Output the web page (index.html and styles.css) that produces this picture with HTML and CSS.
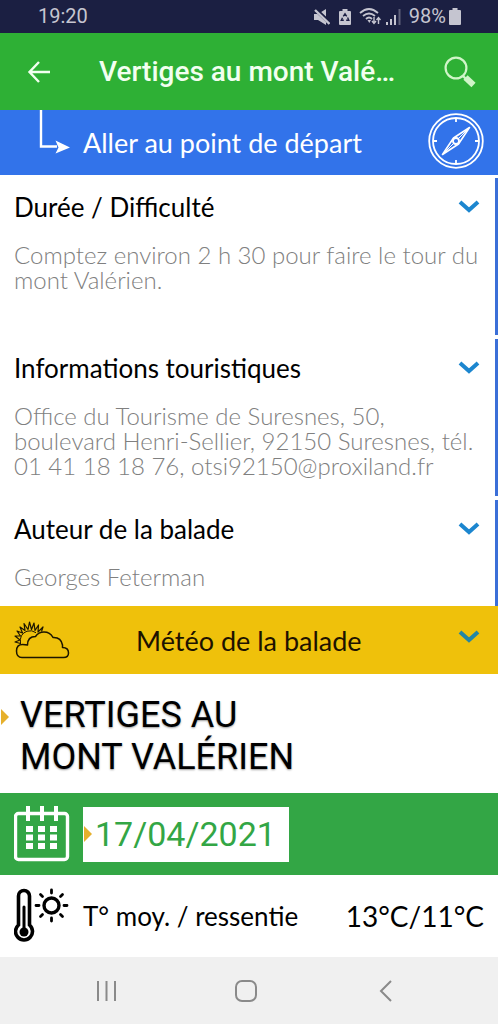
FILE: index.html
```html
<!DOCTYPE html>
<html lang="fr">
<head>
<meta charset="utf-8">
<meta name="viewport" content="width=device-width, initial-scale=1">
<title>Vertiges au mont Valérien</title>
<link rel="stylesheet" href="styles.css">
</head>
<body>
<div class="status">
  <time>19:20</time>
  <div class="status-icons">
    <svg width="16" height="16" viewBox="0 0 16 16" fill="currentColor"><path d="M0 5h4l8-5v16l-8-5H0z"/><path d="M0 -1l17 16" stroke="#1b1f42" stroke-width="4"/><path d="M1 1l14.500 14" stroke="currentColor" stroke-width="2.400"/></svg>
    <svg class="saver" width="12" height="16" viewBox="0 0 12 16"><path d="M3.500 0h5v2H11q1 0 1 1v12q0 1-1 1H1q-1 0-1-1V3q0-1 1-1h2.500z" fill="currentColor"/><path d="M4.300 7.300L6 4.800l1.700 2.500M8.600 8.500l1.200 2.800H7.200M4.800 11.300H2.300l1.200-2.600" fill="none" stroke="#1b1f42" stroke-width="1.400"/></svg>
    <svg class="wifi" width="22" height="17" viewBox="0 0 22 17" fill="none" stroke="currentColor" stroke-width="1.800"><path d="M1 5q9-8 18 0M4 8q6-5 12 0M7 11q3-3 6 0"/><path d="M8.500 12h3.500l-1.700 3z" fill="currentColor" stroke="none"/><path d="M15 9v6m-2-2l2 2.500 2-2.500M19.500 16v-6m-2 2l2-2.500 2 2.500" stroke-width="1.400"/></svg>
    <svg class="signal" width="15" height="16" viewBox="0 0 15 16" fill="currentColor"><path d="M0 13h2v3H0zM4 10h2v6H4zM8 6h2v10H8z"/><path d="M12.500 0h2v16h-2z" opacity=".4"/></svg>
    <span>98%</span>
    <svg class="battery" width="12" height="17" viewBox="0 0 12 17" fill="currentColor"><path d="M3.500 0h5v2H11q1 0 1 1v13q0 1-1 1H1q-1 0-1-1V3q0-1 1-1h2.500z"/></svg>
  </div>
</div>

<header class="appbar">
  <button class="icon-button" type="button" aria-label="Retour">
    <svg width="24" height="24" viewBox="0 0 24 24" fill="none" stroke="currentColor" stroke-width="2.400"><path d="M23 12H2M12 2L2.500 12 12 22"/></svg>
  </button>
  <h1>Vertiges au mont Valé…</h1>
  <button class="icon-button search" type="button" aria-label="Rechercher">
    <svg width="32" height="32" viewBox="0 0 32 32" fill="none" stroke="currentColor"><circle cx="12" cy="12" r="10.400" stroke-width="2.200"/><path d="M18.500 19.500l4 4" stroke-width="2.400"/><path d="M21.500 21.500l8 7.500" stroke-width="6"/></svg>
  </button>
</header>

<main>
  <a class="start" href="#depart">
    <svg class="elbow" width="32" height="65" viewBox="0 0 32 65"><path d="M2 0v36.500h16" fill="none" stroke="currentColor" stroke-width="2.400"/><path d="M16.500 30.500L31 37.500l-14.500 6 3-6z" fill="currentColor"/></svg>
    <span>Aller au point de départ</span>
    <svg class="compass" width="56" height="56" viewBox="0 0 56 56" fill="none" stroke="currentColor" stroke-width="1.800"><circle cx="28" cy="28" r="26.800"/><circle cx="28" cy="28" r="23"/><path d="M28 5v4M28 47v4M5 28h4M47 28h4"/><path d="M41.500 14.500L30.500 31 14.500 41.500 25.500 25z" stroke-linejoin="round" stroke-width="1.600"/><path d="M31 25l9-9M25 31l-9 9" stroke-width="1"/><circle cx="28" cy="28" r="3"/></svg>
  </a>

  <div class="sections">
    <section class="section">
      <h2><button type="button">Durée / Difficulté <svg class="chevron" width="22" height="14" viewBox="0 0 22 14"><path d="M2 2l9 8 9-8"/></svg></button></h2>
      <p>Comptez environ 2 h 30 pour faire le tour du<br>mont Valérien.<br>&nbsp;</p>
    </section>
    <section class="section">
      <h2><button type="button">Informations touristiques <svg class="chevron" width="22" height="14" viewBox="0 0 22 14"><path d="M2 2l9 8 9-8"/></svg></button></h2>
      <p>Office du Tourisme de Suresnes, 50,<br>boulevard Henri-Sellier, 92150 Suresnes, tél.<br>01 41 18 18 76, otsi92150@proxiland.fr</p>
    </section>
    <section class="section">
      <h2><button type="button">Auteur de la balade <svg class="chevron" width="22" height="14" viewBox="0 0 22 14"><path d="M2 2l9 8 9-8"/></svg></button></h2>
      <p>Georges Feterman</p>
    </section>
  </div>

  <button class="weather" type="button">
    <svg width="56" height="40" viewBox="0 0 56 40" fill="none" stroke="#1d1600" stroke-width="1.500" stroke-linejoin="round"><path d="M8 37.500Q2.500 37.500 2.500 31q0-6.500 6-6.500 3.500 0 5 .5 0-8.500 8-8.500 3-4.500 8.500-4.500 6 0 9 5.500 8-.5 9.500 7.500v2.500q6 0 6 5.500 0 4.500-5 4.500z"/><path d="M6.500 24Q5 14 13 11.200q5-1.500 9 1.500" stroke-width="1"/><path d="M6.500 23.500L1 22l5-2L1 16h5.500L3 11l5.500 2L6 7l5 3.500L10 3.500l4 6L15.500 2l2 7.500L20 3l1 7.500L24.500 5l-.5 7L29 7l-1.500 4.500" stroke-width="1.200"/></svg>
    <span>Météo de la balade</span>
    <svg class="chevron" width="22" height="14" viewBox="0 0 22 14"><path d="M2 2l9 8 9-8"/></svg>
  </button>

  <div class="walk">
    <svg class="marker" width="8" height="16" viewBox="0 0 8 16"><path d="M0 0l8 8-8 8z"/></svg>
    <h2>VERTIGES AU<br>MONT VALÉRIEN</h2>
  </div>

  <div class="date">
    <svg width="56" height="56" viewBox="0 0 56 56" fill="currentColor"><rect x="1.500" y="7.500" width="52" height="46" rx="3" fill="none" stroke="currentColor" stroke-width="3.400"/><path d="M12 0h4v15h-4zM26 0h4v15h-4zM40 0h4v15h-4z"/><path d="M12 20h7v6h-7zM24 20h7v6h-7zM36 20h7v6h-7zM12 28.500h7v6h-7zM24 28.500h7v6h-7zM36 28.500h7v6h-7zM12 37h7v6h-7zM24 37h7v6h-7zM36 37h7v6h-7z"/></svg>
    <button class="date-button" type="button"><svg class="marker" width="8" height="16" viewBox="0 0 8 16"><path d="M0 0l8 8-8 8z"/></svg>17/04/2021</button>
  </div>

  <div class="temperature">
    <svg width="56" height="56" viewBox="0 0 56 56" fill="none" stroke="#000"><path d="M4.500 37V8a5.500 5.500 0 0 1 11 0v29a8.500 8.500 0 1 1-11 0z" stroke-width="3.600"/><circle cx="10" cy="44" r="4.500" fill="#000" stroke="none"/><path d="M10 44V19" stroke-width="3" stroke-linecap="round"/><circle cx="37.500" cy="17.500" r="7.500" stroke-width="3.400"/><path d="M37.500 2v3M37.500 30v3M22 17.500h3M50 17.500h3M26.500 6.500l2 2M46.500 26.500l2 2M26.500 28.500l2-2M46.500 8.500l2-2" stroke-width="2.800" stroke-linecap="round"/></svg>
    <span>T° moy. / ressentie</span>
    <span class="value">13°C/11°C</span>
  </div>
</main>

<nav class="navbar">
  <button type="button" aria-label="Applications récentes"><svg width="24" height="24" viewBox="0 0 24 24"><path d="M3 2v20M11.500 2v20M20 2v20"/></svg></button>
  <button type="button" aria-label="Accueil"><svg width="24" height="24" viewBox="0 0 24 24"><rect x="2" y="2" width="20" height="20" rx="6"/></svg></button>
  <button type="button" aria-label="Retour"><svg width="24" height="24" viewBox="0 0 24 24"><path d="M17 2L7 12l10 10"/></svg></button>
</nav>
</body>
</html>
```
FILE: styles.css
```css
* { box-sizing: border-box; }

body {
  margin: 0;
  background: #fff;
  color: #000;
  font-family: Lato, "Liberation Sans", sans-serif;
}

h1, h2, p { margin: 0; font-weight: 400; }

button {
  margin: 0;
  padding: 0;
  border: 0;
  background: none;
  color: inherit;
  font: inherit;
  text-align: left;
}

svg { display: block; flex: none; }

.status {
  display: flex;
  justify-content: space-between;
  align-items: center;
  height: 33px;
  padding: 0 37px 0 38px;
  background: #1b1f42;
  color: #c5c5d0;
  font: 20px/33px Roboto, sans-serif;
}

.status-icons { display: flex; align-items: center; }
.saver { margin-left: 9px; }
.wifi { margin-left: 8px; }
.signal { margin-left: 5px; }
.status-icons span { margin-left: 8px; }
.battery { margin-left: 3px; }

.appbar {
  display: flex;
  align-items: center;
  height: 77px;
  padding: 0 22px 0 27px;
  background: #2eb035;
  color: #f2fff0;
}

.appbar h1 {
  flex: 1;
  margin-left: 48px;
  white-space: nowrap;
  font: 500 28px/40px Roboto, sans-serif;
}

.search { color: #d0f5c8; }

.start {
  display: flex;
  align-items: center;
  height: 65px;
  padding: 0 14px 0 39px;
  background: #3273ea;
  color: #fff;
  font-size: 27px;
  line-height: 36px;
  text-decoration: none;
}

.start span { flex: 1; padding-left: 12px; }

.compass { margin-bottom: 4px; }

.sections {
  display: flex;
  flex-direction: column;
  gap: 4px;
  padding-top: 3px;
}

.section {
  padding: 11px 11px 18px 14px;
  border-right: 3px solid #3b6fd8;
}

.section:last-child { padding-bottom: 17px; }

.section h2 button {
  display: flex;
  justify-content: space-between;
  align-items: center;
  width: 100%;
  font-size: 26px;
  line-height: 36px;
}

.section h2 .chevron { margin-right: 4px; }

.section p {
  margin-top: 17px;
  color: #808080;
  font-size: 24px;
  font-weight: 300;
  line-height: 25px;
  white-space: nowrap;
}

.chevron {
  fill: none;
  stroke: #1c86cf;
  stroke-width: 4;
}

.weather {
  display: flex;
  align-items: center;
  width: 100%;
  height: 68px;
  padding: 0 18px 0 14px;
  background: #efc10b;
  color: #1d1200;
  font-size: 27px;
}

.weather span { flex: 1; padding-left: 66px; }

.weather .chevron { margin-bottom: 6px; stroke: #2386a4; }

.walk {
  display: flex;
  gap: 11px;
  padding: 20px 0 15px 1px;
}

.walk h2 {
  font: 36px/42px Roboto, sans-serif;
  text-shadow: 0 1px 2px #999;
}

.walk .marker { margin-top: 15px; }

.marker { fill: #e6b02c; }

.date {
  display: flex;
  align-items: center;
  gap: 13px;
  height: 82px;
  padding: 0 14px;
  background: #33a645;
  color: #fff;
}

.date-button {
  display: flex;
  align-items: center;
  gap: 3px;
  padding: 0 13px 0 1px;
  background: #fff;
  color: #33a645;
  font: 34px/55px Roboto, sans-serif;
}

.temperature {
  display: flex;
  align-items: center;
  gap: 13px;
  height: 82px;
  padding: 0 14px;
  font-size: 26px;
}

.value { margin-left: auto; font-size: 28px; }

.navbar {
  display: flex;
  justify-content: space-around;
  align-items: center;
  height: 67px;
  padding: 0 42px 0 37px;
  background: #f0f0f0;
}

.navbar svg {
  fill: none;
  stroke: #8a8a8a;
  stroke-width: 2;
}
```
